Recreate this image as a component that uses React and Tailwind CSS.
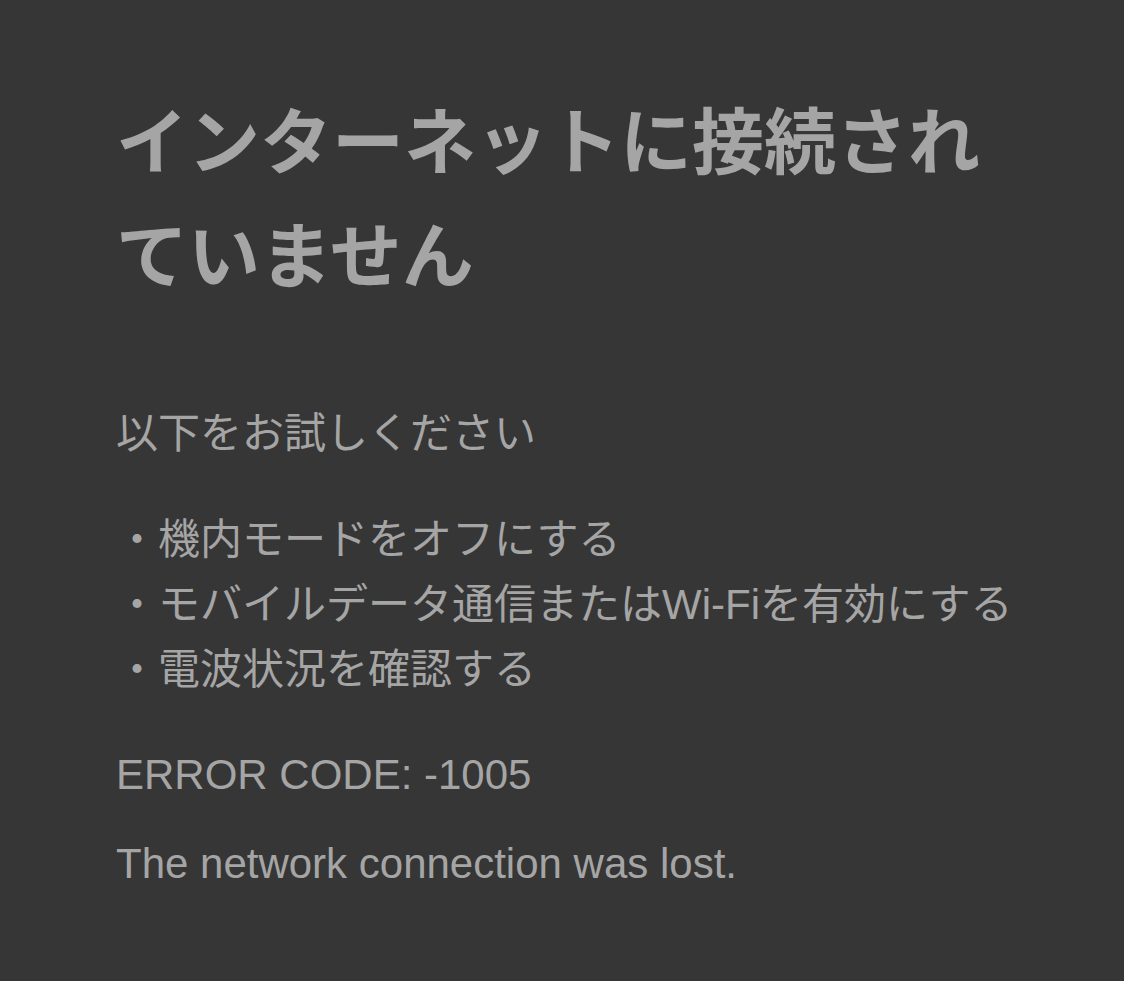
import React from 'react';

const tips = [
  '機内モードをオフにする',
  'モバイルデータ通信またはWi-Fiを有効にする',
  '電波状況を確認する',
];

const App = () => {
  return (
    <div
      className="min-h-screen w-full bg-[#363636] text-[#a5a5a5] px-[116px] pt-[86px] pb-16"
      style={{ fontFamily: '"Liberation Sans", "Noto Sans CJK JP", sans-serif' }}
    >
      {/* Title */}
      <h1 className="text-[72px] leading-[114px] font-bold tracking-normal">
        インターネットに接続されていません
      </h1>

      {/* Suggestions */}
      <p className="mt-[87px] text-[42px] leading-[65px]">以下をお試しください</p>

      <ul className="mt-[41px] text-[42px] leading-[65px]">
        {tips.map((tip) => (
          <li key={tip} className="whitespace-nowrap">
            ・{tip}
          </li>
        ))}
      </ul>

      {/* Error details */}
      <p className="mt-[40px] text-[42px] leading-[65px]">ERROR CODE: -1005</p>
      <p className="mt-[24px] text-[42px] leading-[65px]">The network connection was lost.</p>
    </div>
  );
};

export default App;
